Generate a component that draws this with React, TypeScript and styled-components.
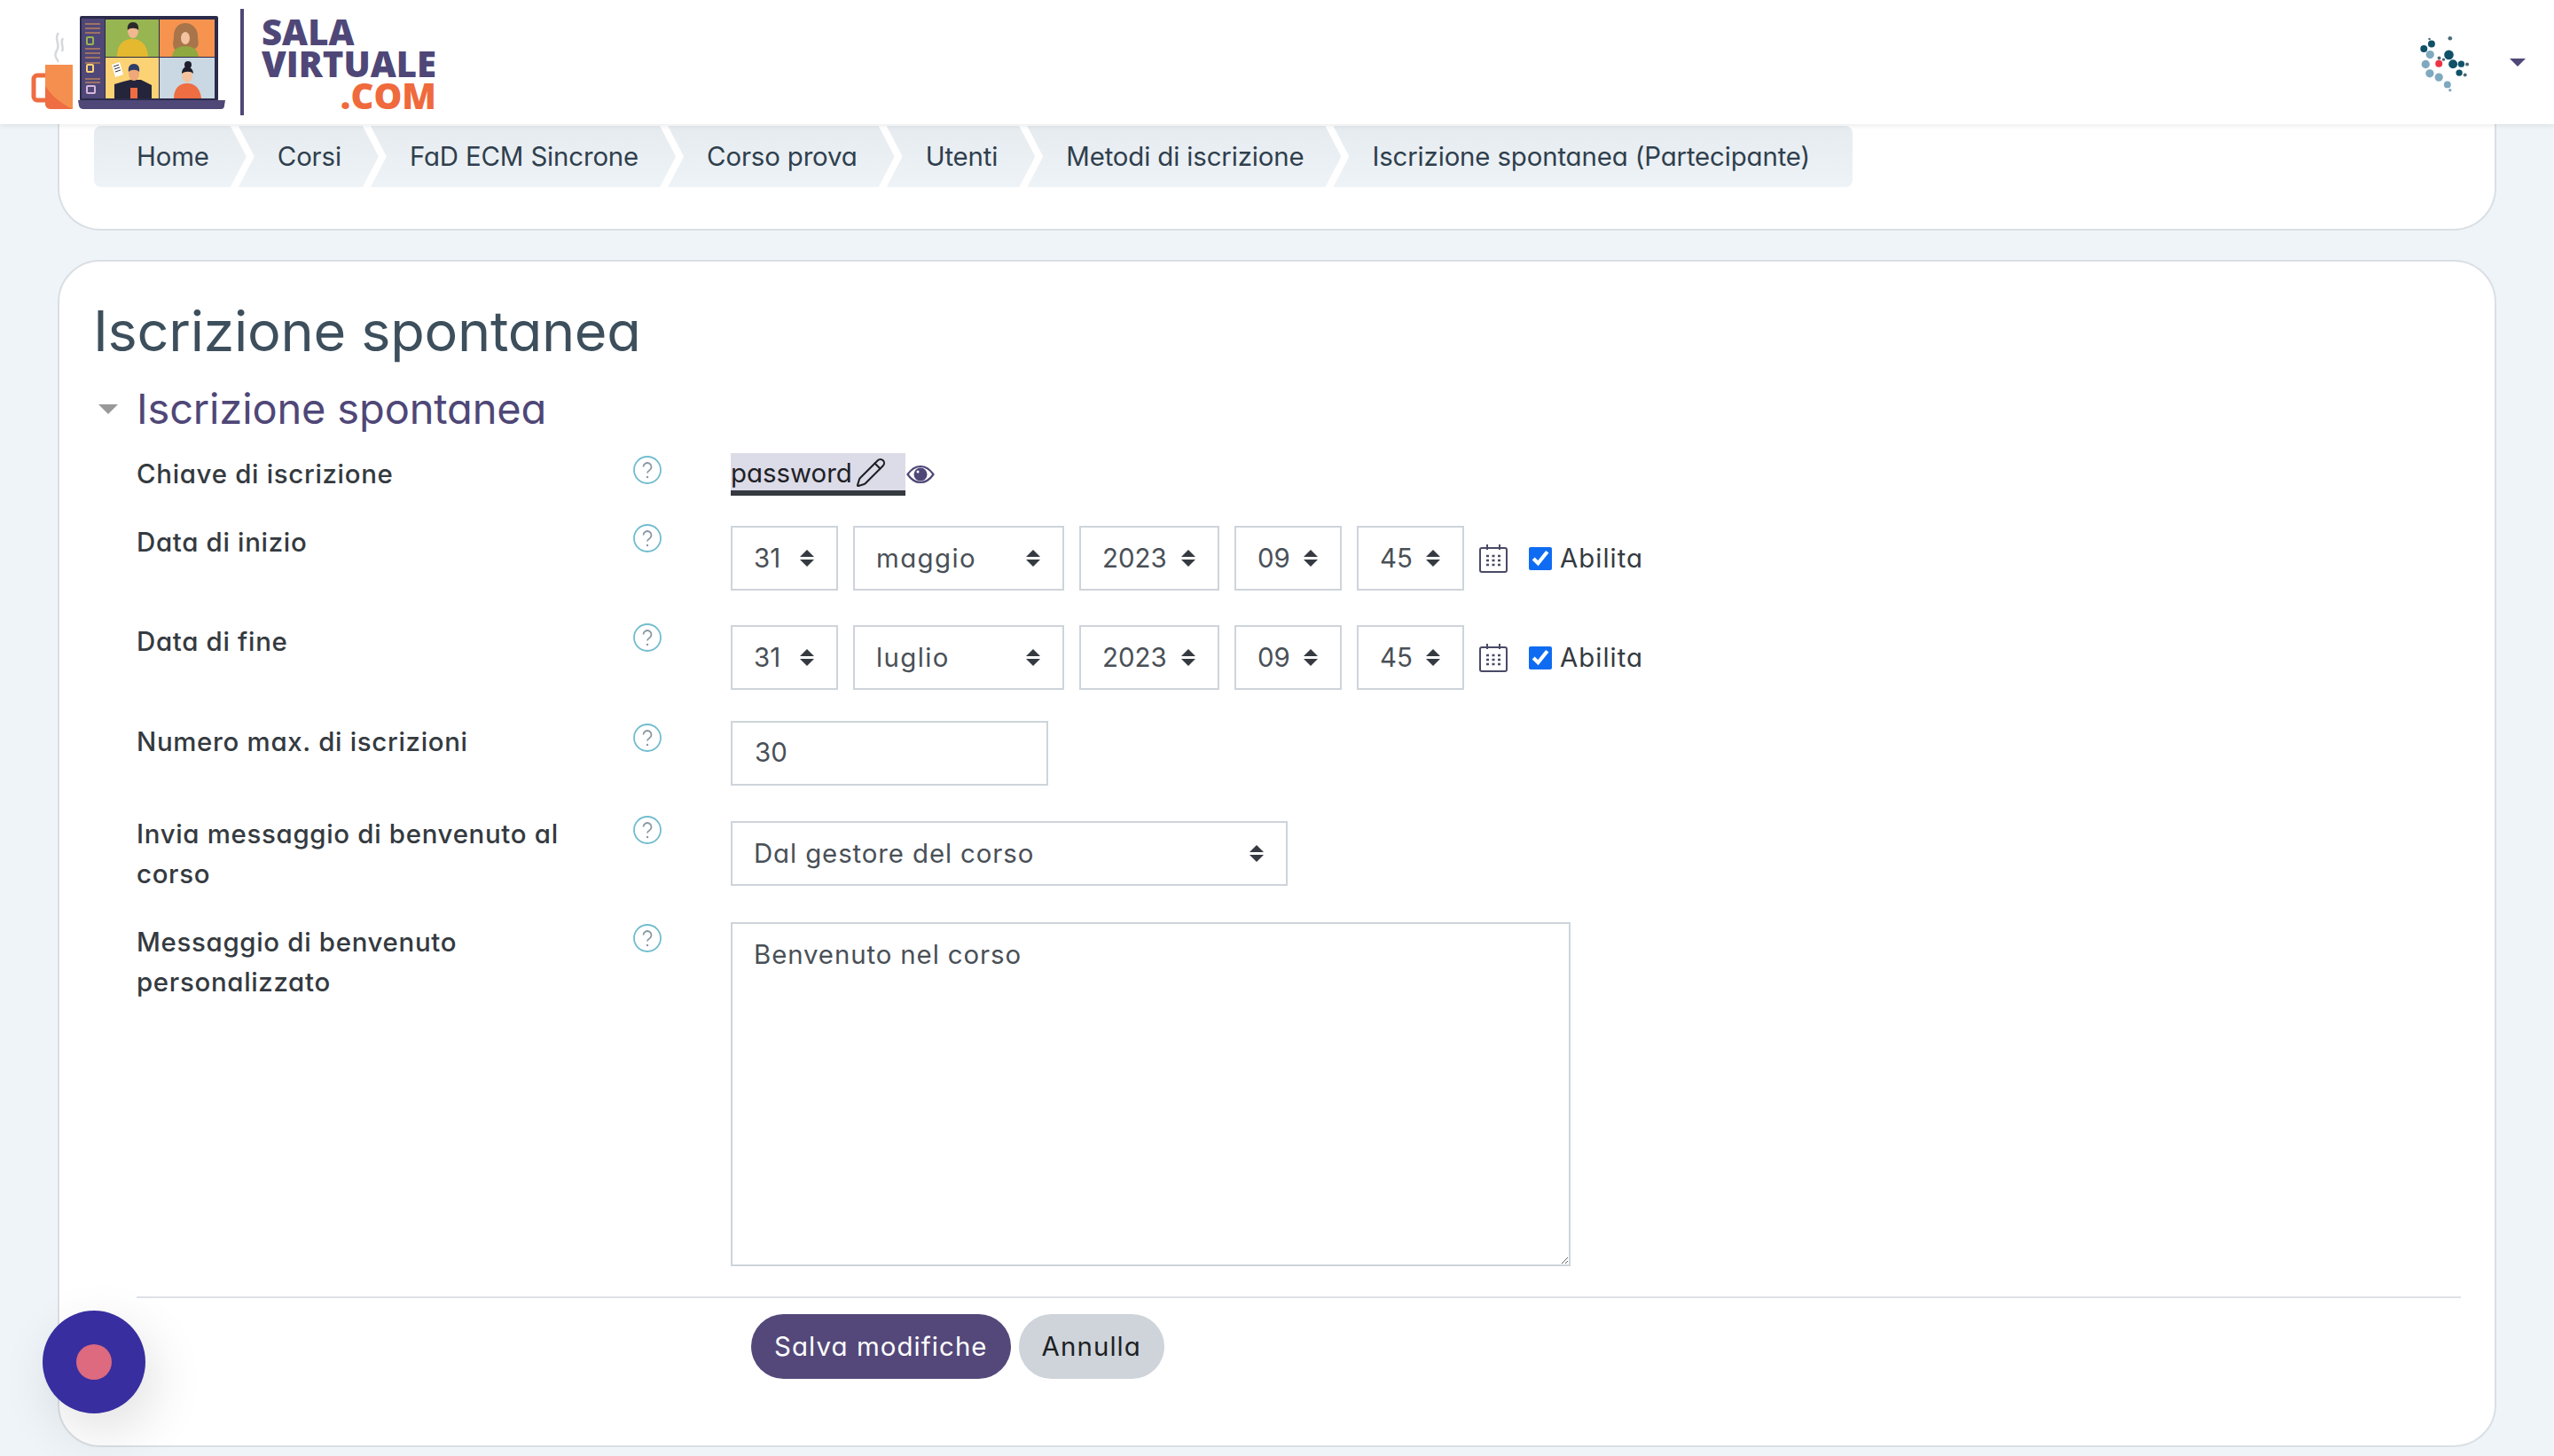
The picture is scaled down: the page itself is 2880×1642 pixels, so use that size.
import React, { FC } from 'react';
import styled, { createGlobalStyle } from 'styled-components';
import { Pencil } from 'lucide-react';

const fontStack = `Inter, "Liberation Sans", sans-serif`;
const arrows = `url("data:image/svg+xml,%3Csvg xmlns='http://www.w3.org/2000/svg' viewBox='0 0 16 19'%3E%3Cpath fill='%23343a40' d='M8 0l8 8H0zM8 19l-8-8h16z'/%3E%3C/svg%3E")`;

const GlobalStyle = createGlobalStyle`
  html, body {
    margin: 0;
    padding: 0;
    background: #eff4f8;
  }
  body {
    font-family: ${fontStack};
    font-feature-settings: 'cv11' 1;
    color: #343a40;
  }
`;

const Page = styled.div`
  height: 1642px;
  overflow: hidden;
  background: #eff4f8;
`;

const Header = styled.header`
  position: relative;
  z-index: 2;
  height: 140px;
  display: flex;
  align-items: center;
  justify-content: space-between;
  background: #fff;
  box-shadow: 0 2px 6px rgba(0, 0, 0, 0.08);
  padding: 0 32px 0 35px;
  box-sizing: border-box;
`;

const LogoWrap = styled.div`
  display: flex;
  align-items: center;
`;

const LogoDivider = styled.div`
  width: 4px;
  height: 120px;
  margin: 0 20px 0 16px;
  background: #4f4777;
`;

const LogoText = styled.div`
  display: flex;
  flex-direction: column;
  margin-top: 4px;
  font-family: 'Open Sans', sans-serif;
  font-weight: 800;
  font-size: 40px;
  line-height: 36px;
  color: #4f4777;
`;

const LogoCom = styled.span`
  align-self: flex-end;
  color: #ef6a3c;
`;

const UserMenu = styled.div`
  display: flex;
  align-items: center;
  gap: 42px;
`;

const Main = styled.main`
  padding: 0 65px;
`;

const TopCard = styled.section`
  height: 120px;
  box-sizing: border-box;
  padding: 2px 0 0 39px;
  background: #fff;
  border: 2px solid #d9dfe4;
  border-top: 0;
  border-radius: 0 0 48px 48px;
`;

const Crumbs = styled.ol`
  display: flex;
  list-style: none;
  margin: 0;
  padding: 0;
`;

const Crumb = styled.li<{ $first?: boolean; $last?: boolean }>`
  height: 69px;
  display: flex;
  align-items: center;
  box-sizing: border-box;
  margin-left: ${(p) => (p.$first ? '0' : '-9px')};
  padding: 0 ${(p) => (p.$last ? '48px' : '42px')} 0 ${(p) => (p.$first ? '48px' : '44px')};
  font-size: 29.4px;
  letter-spacing: -0.14px;
  color: #2f3f4d;
  background: linear-gradient(#e6ebf0, #eef3f7);
  border-radius: ${(p) => (p.$first ? '8px 0 0 8px' : p.$last ? '0 8px 8px 0' : '0')};
  clip-path: ${(p) =>
    p.$first
      ? 'polygon(0 0, calc(100% - 18px) 0, 100% 50%, calc(100% - 18px) 100%, 0 100%)'
      : p.$last
        ? 'polygon(0 0, 100% 0, 100% 100%, 0 100%, 18px 50%)'
        : 'polygon(0 0, calc(100% - 18px) 0, 100% 50%, calc(100% - 18px) 100%, 0 100%, 18px 50%)'};
`;

const FormCard = styled.section`
  margin-top: 33px;
  padding: 38px 38px 75px 38px;
  background: #fff;
  border: 2px solid #d9dfe4;
  border-radius: 48px;
`;

const Title = styled.h1`
  margin: 0 0 18px;
  font-size: 63px;
  letter-spacing: -0.3px;
  line-height: 80px;
  font-weight: 400;
  color: #3d4f5c;
`;

const SectionHead = styled.div`
  display: flex;
  align-items: center;
  height: 60px;
  margin-bottom: 20px;
`;

const Caret = styled.svg`
  width: 22px;
  height: 11px;
  margin: 0 21px 0 6px;
`;

const SectionTitle = styled.h2`
  margin: 0 0 2px;
  font-size: 47px;
  letter-spacing: -0.15px;
  font-weight: 400;
  color: #4f4777;
`;

const Form = styled.form`
  padding-left: 49px;
`;

const Row = styled.div<{ $gap: number }>`
  display: grid;
  grid-template-columns: 670px 1fr;
  align-items: start;
  margin-bottom: ${(p) => p.$gap}px;
`;

const LabelCell = styled.div<{ $shift: number }>`
  display: grid;
  grid-template-columns: 560px 32px;
  align-items: start;
  margin-top: ${(p) => p.$shift}px;
`;

const FieldLabel = styled.label`
  width: 530px;
  font-size: 29.4px;
  letter-spacing: 0.7px;
  line-height: 45px;
  font-weight: 500;
  color: #343a40;
`;

const HelpIcon = styled.svg`
  width: 32px;
  height: 32px;
  margin-top: 2px;
`;

const Controls = styled.div`
  display: flex;
  align-items: center;
`;

const PasswordField = styled.span`
  display: flex;
  align-items: center;
  gap: 3px;
  width: 197px;
  height: 48px;
  box-sizing: border-box;
  padding-top: 2px;
  background: #dcdbe8;
  border-bottom: 6px solid #343a40;
  font-size: 29.4px;
  color: #1d2125;
`;

const EyeIcon = styled.svg`
  width: 32px;
  height: 22px;
  margin-left: 1px;
`;

const DateGroup = styled.div`
  display: flex;
  align-items: center;
  gap: 17px;
`;

const Select = styled.select<{ $width: number; $spacing?: number }>`
  width: ${(p) => p.$width}px;
  height: 73px;
  box-sizing: border-box;
  appearance: none;
  padding: 0 0 0 24px;
  border: 2px solid #ced4da;
  border-radius: 0;
  background: #fff ${arrows} no-repeat right 25px center / 16px 19px;
  font-family: ${fontStack};
  font-feature-settings: 'cv11' 1;
  font-size: 29.4px;
  letter-spacing: ${(p) => p.$spacing ?? 0}px;
  color: #495057;
`;

const CalendarIcon = styled.svg`
  width: 32px;
  height: 32px;
`;

const EnableLabel = styled.label`
  display: flex;
  align-items: center;
  gap: 9px;
  margin-left: 7px;
  font-size: 29.4px;
  letter-spacing: 1px;
  color: #343a40;
`;

const Check = styled.input`
  width: 26px;
  height: 26px;
  margin: 0;
  accent-color: #0f6cf2;
`;

const TextInput = styled.input`
  width: 358px;
  height: 73px;
  box-sizing: border-box;
  padding: 0 25px 2px;
  border: 2px solid #ced4da;
  font-family: ${fontStack};
  font-size: 29.4px;
  color: #495057;
`;

const MessageArea = styled.textarea`
  display: block;
  width: 947px;
  height: 388px;
  box-sizing: border-box;
  padding: 17px 24px;
  border: 2px solid #ced4da;
  border-radius: 0;
  font-family: ${fontStack};
  font-feature-settings: 'cv11' 1;
  font-size: 29.4px;
  letter-spacing: 0.9px;
  line-height: 36px;
  color: #495057;
`;

const Divider = styled.div`
  height: 2px;
  margin-top: 34px;
  background: #dee2e6;
`;

const Actions = styled.div`
  display: flex;
  gap: 9px;
  margin-top: 18px;
  padding-left: 693px;
`;

const PillButton = styled.button<{ $primary?: boolean }>`
  height: 73px;
  padding: 0 26px;
  border: 0;
  border-radius: 37px;
  font-family: ${fontStack};
  font-feature-settings: 'cv11' 1;
  font-size: 29.4px;
  letter-spacing: 1.1px;
  background: ${(p) => (p.$primary ? '#54487a' : '#ced4da')};
  color: ${(p) => (p.$primary ? '#fff' : '#1d2125')};
`;

const RecordButton = styled.div`
  position: fixed;
  left: 48px;
  bottom: 48px;
  width: 116px;
  height: 116px;
  display: flex;
  align-items: center;
  justify-content: center;
  border-radius: 50%;
  background: #382ea0;
  box-shadow: 10px 20px 60px rgba(0, 0, 0, 0.12);
`;

const RecordDot = styled.div`
  width: 40px;
  height: 40px;
  border-radius: 50%;
  background: #dd6a7f;
`;

const LogoArt: FC = () => (
  <svg width="220" height="120" viewBox="35 9 220 120">
    {/* steam */}
    <path d="M66 36c-6 8 3 12-2 20s3 10 1 13M71 42c-4 6 2 9-1 15" fill="none" stroke="#d5d8dc" strokeWidth="2.5" />
    {/* mug */}
    <path d="M52 84H42a4 4 0 0 0-4 4v20a4 4 0 0 0 4 4h10" fill="none" stroke="#ee6d42" strokeWidth="5" />
    <path d="M51 72h31v50H57a6 6 0 0 1-6-6z" fill="#f58f4f" />
    <path d="M51 96c8 12 18 20 31 26H57a6 6 0 0 1-6-6z" fill="#ee6d42" />
    {/* laptop */}
    <rect x="90" y="17" width="156" height="96" rx="2" fill="#2b2a4a" />
    <rect x="92" y="20" width="26" height="90" fill="#4f4777" />
    <rect x="119" y="21" width="60" height="42" fill="#97b551" />
    <rect x="180" y="21" width="62" height="42" fill="#f5934f" />
    <rect x="119" y="64" width="60" height="46" fill="#fbd274" />
    <rect x="180" y="64" width="62" height="46" fill="#c9d8e3" />
    <path d="M88 112h166l-1 6a4 4 0 0 1-4 4H94a5 5 0 0 1-5-4z" fill="#4f4777" />
    {/* sidebar */}
    <path d="M96 26h17M96 31h17M96 36h17M96 54h17M96 59h17M96 64h17M96 70h17M96 88h17M96 92h17" stroke="#b9815e" strokeWidth="1.5" />
    <rect x="98" y="41" width="7" height="8" rx="1" fill="none" stroke="#97b551" strokeWidth="2" />
    <rect x="98" y="72" width="7" height="8" rx="1" fill="none" stroke="#fbd274" strokeWidth="2" />
    <rect x="98" y="96" width="9" height="8" rx="1" fill="none" stroke="#d6b6da" strokeWidth="2" />
    {/* top left person */}
    <path d="M132 63c0-12 5-20 17-20s17 8 18 20z" fill="#e5b92f" />
    <ellipse cx="150" cy="34" rx="6" ry="8" fill="#f0b890" />
    <path d="M144 33c-1-6 2-9 6-9s7 3 6 9c-2-3-10-3-12 0z" fill="#2b2a2a" />
    {/* top right person */}
    <path d="M196 40c0-10 6-15 13-15s14 6 14 14 3 11-3 15-22 5-24-1 0-8 0-13z" fill="#a8744a" />
    <ellipse cx="209" cy="42" rx="5" ry="7" fill="#f3c3a0" />
    <path d="M194 63c1-8 6-12 15-12s14 4 15 12z" fill="#8fa83f" />
    {/* bottom left person */}
    <path d="M129 110V94l10-3 8-2h12l12 6v15z" fill="#24243a" />
    <rect x="147" y="98" width="8" height="12" fill="#ee6d42" />
    <ellipse cx="151" cy="82" rx="6" ry="8" fill="#f0a878" />
    <path d="M145 80c-1-6 2-9 6-9s7 3 6 9c-3-3-9-3-12 0z" fill="#2f3d6b" />
    <path d="M126 72l9-3 4 14-9 3z" fill="#fff" />
    <path d="M128 74l6-2M129 77l6-2M130 80l6-2" stroke="#333" strokeWidth="1" />
    {/* bottom right person */}
    <path d="M196 110c0-10 5-17 15-17s15 7 16 17z" fill="#ee6d42" />
    <ellipse cx="211" cy="84" rx="6" ry="8" fill="#f3c3a0" />
    <circle cx="212" cy="72" r="4" fill="#1e1e2c" />
    <path d="M205 82c0-5 3-8 6-8s7 3 7 8c-3-3-9-3-13 0z" fill="#1e1e2c" />
  </svg>
);

const NetworkAvatar: FC = () => {
  const dark = '#0f5168';
  const mid = '#7fa9bf';
  const dots: [number, number, number, string][] = [
    [235, 130, 4, '#4a6a78'], [305, 128, 7, '#4a6a78'], [242, 147, 12, dark], [216, 163, 12, dark],
    [237, 183, 14, mid], [301, 184, 16, dark], [222, 216, 14, mid], [315, 215, 15, dark],
    [343, 215, 11, dark], [363, 216, 6, '#4a6a78'], [236, 247, 14, mid], [267, 260, 14, mid],
    [336, 245, 11, dark], [356, 252, 6, '#4a6a78'], [296, 285, 12, mid], [305, 304, 5, mid],
    [268, 195, 6, '#4a6a78'], [283, 200, 5, '#4a6a78'], [267, 214, 12, '#ee3344'],
  ];
  return (
    <svg width="67" height="73" viewBox="180 100 200 220">
      {dots.map(([x, y, r, c]) => (
        <circle key={`${x}-${y}`} cx={x} cy={y} r={r} fill={c} />
      ))}
    </svg>
  );
};

const Help: FC = () => (
  <HelpIcon viewBox="0 0 32 32" fill="none">
    <circle cx="16" cy="16" r="15" stroke="#72bdce" strokeWidth="1.8" />
    <path d="M11.5 12.5a4.5 4.5 0 1 1 6.8 3.9c-1.4.8-2.3 1.6-2.3 3.1" stroke="#8b98a3" strokeWidth="1.8" />
    <circle cx="16" cy="24" r="1.2" fill="#8b98a3" />
  </HelpIcon>
);

const Calendar: FC = () => (
  <CalendarIcon viewBox="0 0 32 32" fill="none" stroke="#4a4a66" strokeWidth="2">
    <rect x="1" y="4" width="30" height="27" rx="2" />
    <path d="M9 0v6M23 0v6" />
    <path d="M8 13h3M14.500 13h3M21 13h3M8 18h3M14.500 18h3M21 18h3M8 23h3M14.500 23h3M21 23h3" strokeWidth="2.600" />
  </CalendarIcon>
);

type DateRowProps = { month: string };

const DateFields: FC<DateRowProps> = ({ month }) => (
  <DateGroup>
    <Select $width={121} defaultValue="31"><option>31</option></Select>
    <Select $width={238} $spacing={1.4} defaultValue={month}><option>{month}</option></Select>
    <Select $width={158} defaultValue="2023"><option>2023</option></Select>
    <Select $width={121} defaultValue="09"><option>09</option></Select>
    <Select $width={121} defaultValue="45"><option>45</option></Select>
    <Calendar />
    <EnableLabel>
      <Check type="checkbox" defaultChecked />
      Abilita
    </EnableLabel>
  </DateGroup>
);

const crumbs = ['Home', 'Corsi', 'FaD ECM Sincrone', 'Corso prova', 'Utenti', 'Metodi di iscrizione', 'Iscrizione spontanea (Partecipante)'];

export default function App() {
  return (
    <Page>
      <GlobalStyle />
      <Header>
        <LogoWrap>
          <LogoArt />
          <LogoDivider />
          <LogoText>
            <span>SALA</span>
            <span>VIRTUALE</span>
            <LogoCom>.COM</LogoCom>
          </LogoText>
        </LogoWrap>
        <UserMenu>
          <NetworkAvatar />
          <svg width="18" height="9" viewBox="0 0 18 9">
            <path d="M0 0h18l-9 9z" fill="#4f4777" />
          </svg>
        </UserMenu>
      </Header>
      <Main>
        <TopCard>
          <Crumbs>
            {crumbs.map((c, i) => (
              <Crumb key={c} $first={i === 0} $last={i === crumbs.length - 1}>{c}</Crumb>
            ))}
          </Crumbs>
        </TopCard>
        <FormCard>
          <Title>Iscrizione spontanea</Title>
          <SectionHead>
            <Caret viewBox="0 0 22 11"><path d="M0 0h22L11 11z" fill="#999" /></Caret>
            <SectionTitle>Iscrizione spontanea</SectionTitle>
          </SectionHead>
          <Form>
            <Row $gap={34}>
              <LabelCell $shift={1}>
                <FieldLabel>Chiave di iscrizione</FieldLabel>
                <Help />
              </LabelCell>
              <Controls>
                <PasswordField>
                  password
                  <Pencil size={36} strokeWidth={1.4} />
                </PasswordField>
                <EyeIcon viewBox="0 0 32 22">
                  <path d="M1.500 11C6 4.500 11 2 16 2s10 2.500 14.500 9C26 17.500 21 20 16 20S6 17.500 1.500 11z" fill="none" stroke="#4f4777" strokeWidth="2.200" />
                  <circle cx="16" cy="11" r="7.500" fill="#4f4777" />
                  <circle cx="13" cy="8" r="1.500" fill="#fff" />
                </EyeIcon>
              </Controls>
            </Row>
            <Row $gap={39}>
              <LabelCell $shift={-4}>
                <FieldLabel>Data di inizio</FieldLabel>
                <Help />
              </LabelCell>
              <DateFields month="maggio" />
            </Row>
            <Row $gap={35}>
              <LabelCell $shift={-4}>
                <FieldLabel>Data di fine</FieldLabel>
                <Help />
              </LabelCell>
              <DateFields month="luglio" />
            </Row>
            <Row $gap={40}>
              <LabelCell $shift={1}>
                <FieldLabel>Numero max. di iscrizioni</FieldLabel>
                <Help />
              </LabelCell>
              <TextInput defaultValue="30" />
            </Row>
            <Row $gap={32}>
              <LabelCell $shift={-8}>
                <FieldLabel>Invia messaggio di benvenuto al corso</FieldLabel>
                <Help />
              </LabelCell>
              <Select $width={628} $spacing={0.9} defaultValue="Dal gestore del corso">
                <option>Dal gestore del corso</option>
              </Select>
            </Row>
            <Row $gap={0}>
              <LabelCell $shift={0}>
                <FieldLabel>Messaggio di benvenuto personalizzato</FieldLabel>
                <Help />
              </LabelCell>
              <MessageArea defaultValue="Benvenuto nel corso" />
            </Row>
            <Divider />
            <Actions>
              <PillButton type="button" $primary>Salva modifiche</PillButton>
              <PillButton type="button">Annulla</PillButton>
            </Actions>
          </Form>
        </FormCard>
      </Main>
      <RecordButton>
        <RecordDot />
      </RecordButton>
    </Page>
  );
}
